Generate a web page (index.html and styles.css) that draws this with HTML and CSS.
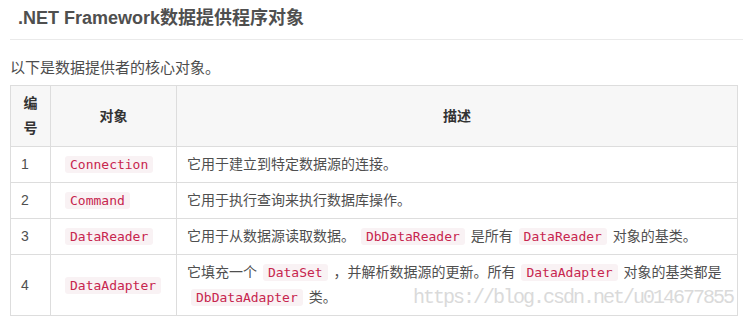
FILE: index.html
```html
<!DOCTYPE html>
<html lang="zh">
<head>
<meta charset="utf-8">
<title>.NET Framework数据提供程序对象</title>
<link rel="stylesheet" href="styles.css">
</head>
<body>
<div class="page">
  <h2 class="title">.NET Framework数据提供程序对象</h2>
  <p class="intro">以下是数据提供者的核心对象。</p>
  <table class="objects">
    <colgroup>
      <col class="c-num">
      <col class="c-obj">
      <col class="c-desc">
    </colgroup>
    <thead>
      <tr><th>编号</th><th>对象</th><th>描述</th></tr>
    </thead>
    <tbody>
      <tr><td>1</td><td><code>Connection</code></td><td>它用于建立到特定数据源的连接。</td></tr>
      <tr><td>2</td><td><code>Command</code></td><td>它用于执行查询来执行数据库操作。</td></tr>
      <tr><td>3</td><td><code>DataReader</code></td><td>它用于从数据源读取数据。 <code>DbDataReader</code> 是所有 <code>DataReader</code> 对象的基类。</td></tr>
      <tr><td>4</td><td><code>DataAdapter</code></td><td>它填充一个 <code>DataSet</code> ，并解析数据源的更新。所有 <code>DataAdapter</code> 对象的基类都是 <code>DbDataAdapter</code> 类。</td></tr>
    </tbody>
  </table>
  <div class="watermark">https://blog.csdn.net/u014677855</div>
</div>
</body>
</html>
```

FILE: styles.css
```css
html, body {
  margin: 0;
  padding: 0;
  background: #fff;
}

.page {
  position: relative;
  padding-left: 10px;
  width: 733px;
  height: 320px;
  overflow: hidden;
  font-family: "Liberation Sans", "Noto Sans CJK SC", sans-serif;
  color: #4f4f4f;
}

.title {
  margin: 0;
  padding: 5px 0 8px 8px;
  font-size: 18px;
  line-height: 26px;
  font-weight: bold;
  color: #4f4f4f;
  border-bottom: 1px solid #eaeaea;
}

.intro {
  margin: 15px 0 5px;
  font-size: 15px;
  line-height: 25px;
  color: #4d4d4d;
}

.objects {
  width: 728px;
  border-collapse: collapse;
  table-layout: fixed;
  font-size: 14px;
  line-height: 25px;
}

.c-num { width: 40px; }
.c-obj { width: 126px; }

.objects th,
.objects td {
  border: 1px solid #dddddd;
  padding: 5px 10px;
  vertical-align: middle;
  text-align: left;
  word-spacing: -2px;
}

.objects th {
  background: #f7f7f7;
  font-weight: bold;
  color: #333;
  text-align: center;
}

.objects code {
  font-family: "DejaVu Sans Mono", "Liberation Mono", monospace;
  font-size: 13px;
  word-spacing: 0;
  color: #c7254e;
  background: #f9f2f4;
  border-radius: 3px;
  padding: 1px 5px;
  margin: 0 4px;
}

.watermark {
  position: absolute;
  left: 413px;
  top: 284px;
  font-family: "Liberation Mono", monospace;
  font-size: 20px;
  letter-spacing: -2px;
  line-height: 28px;
  color: #dadada;
  white-space: nowrap;
}
```
